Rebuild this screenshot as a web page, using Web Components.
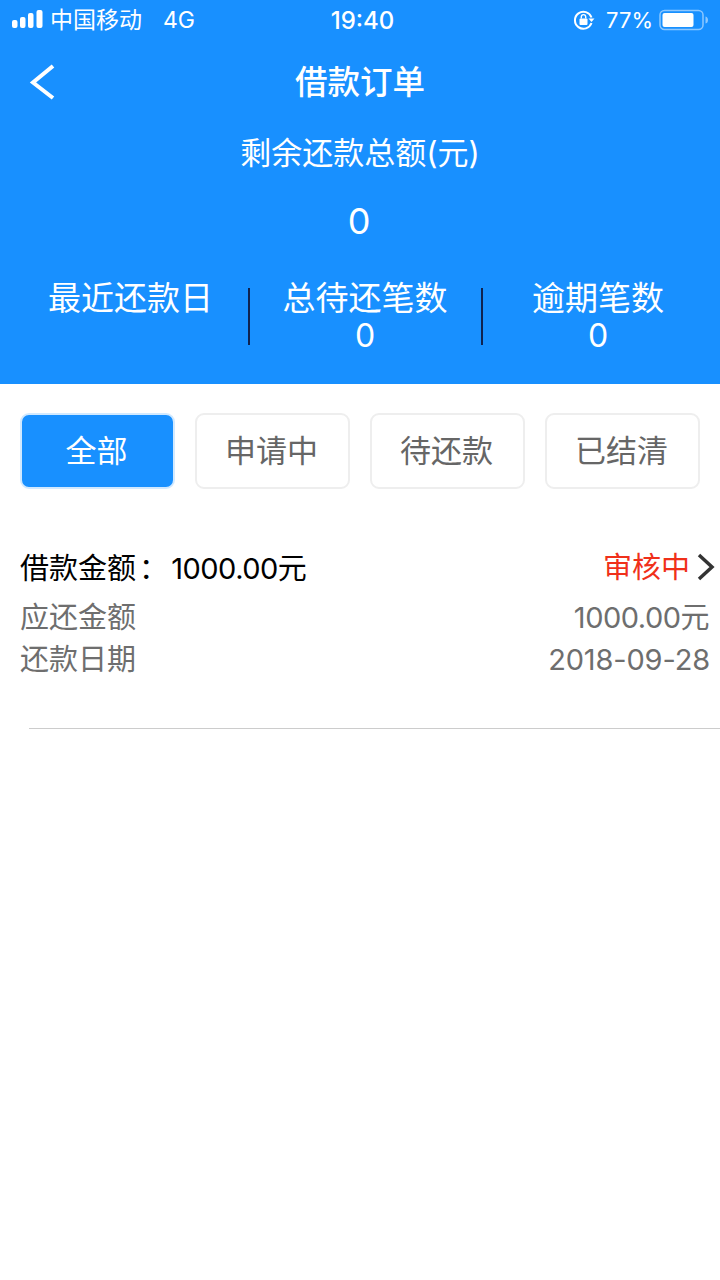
<!DOCTYPE html>
<html lang="zh">
<head>
<meta charset="utf-8">
<title>借款订单</title>
<style>
  html, body { margin: 0; background: #fff; }
  body { font-family: "Inter", "Noto Sans CJK SC", sans-serif; }
</style>
</head>
<body>
<loan-header></loan-header>
<loan-tabs>
  <loan-tab active>全部</loan-tab>
  <loan-tab>申请中</loan-tab>
  <loan-tab>待还款</loan-tab>
  <loan-tab>已结清</loan-tab>
</loan-tabs>
<loan-order amount="1000.00元" status="审核中" due="1000.00元" date="2018-09-28"></loan-order>

<script>
// status bar + title + summary, all on the blue block
class LoanHeader extends HTMLElement {
  constructor() {
    super();
    this.attachShadow({ mode: 'open' });
    this.shadowRoot.innerHTML = /*html*/ `
      <style>
        :host { display: block; height: 384px; background: #1890ff; color: #fff; overflow: hidden; }
        .status { display: grid; grid-template-columns: 1fr auto 1fr; align-items: center; height: 40px; font-size: 23px; color: #fff; }
        .left { display: flex; align-items: center; padding-left: 12px; }
        .left svg { margin-right: 6px; }
        .left .carrier { padding-bottom: 4px; }
        .left .net { margin-left: 21px; }
        .time { font-size: 24px; font-weight: 500; padding: 1px 0 0 5px; }
        .right { display: flex; align-items: center; justify-content: flex-end; padding-right: 11px; }
        .right .pct { font-size: 22px; margin: 0 6px 0 11px; }
        .nav { position: relative; display: flex; align-items: center; justify-content: center; height: 82px; font-size: 32.500px; font-weight: 500; padding-bottom: 4px; box-sizing: border-box; }
        .nav svg { position: absolute; left: 28px; top: 23px; }
        .sub { text-align: center; font-size: 31px; line-height: 40px; margin-top: 11px; }
        .total { text-align: center; font-size: 36px; line-height: 44px; margin-top: 26px; padding-right: 2px; }
        .stats { display: grid; grid-template-columns: 233px 233px 233px; padding-left: 17px; margin-top: 36px; font-size: 33px; line-height: 38px; }
        .stat { text-align: center; height: 76px; box-sizing: border-box; }
        .stat:first-child { padding-right: 6px; }
        .stat + .stat { position: relative; padding-right: 3px; }
        .stat + .stat::before { content: ""; position: absolute; left: -2px; top: 9px; width: 2px; height: 57px; background: #0f2350; }
        .stat b { font: inherit; font-size: 32px; position: relative; top: -1px; }
      </style>
      <div class="status">
        <div class="left">
          <svg width="32" height="20" viewBox="0 0 32 20" fill="#fff">
            <rect x="0" y="10" width="5.500" height="8" rx="2"/>
            <rect x="8" y="7" width="5.500" height="11" rx="2"/>
            <rect x="16" y="3" width="5.500" height="15" rx="2"/>
            <rect x="24.500" y="0" width="6" height="18" rx="2"/>
          </svg>
          <span class="carrier">中国移动</span><span class="net">4G</span>
        </div>
        <div class="time">19:40</div>
        <div class="right">
          <svg width="22" height="22" viewBox="0 0 22 22" fill="none">
            <path d="M18.500 8.500A8.500 8.500 0 1 0 18.500 14" stroke="#fff" stroke-width="2"/>
            <path d="M15.500 9.500h6l-3 3.500z" fill="#fff"/>
            <rect x="6.500" y="9.500" width="8" height="6.500" rx="1" fill="#fff"/>
            <path d="M8.300 9.500V7.800a2.200 2.200 0 0 1 4.400 0v1.700" stroke="#fff" stroke-width="1.400"/>
          </svg>
          <span class="pct">77%</span>
          <svg width="50" height="22" viewBox="0 0 50 22">
            <rect x="1" y="1.500" width="43" height="19" rx="4.500" fill="none" stroke="#8cc7ff" stroke-width="1.500"/>
            <rect x="3.500" y="4" width="31" height="14" rx="2" fill="#fff"/>
            <path d="M46.500 7.500c2 .5 2.500 2 2.500 3.500s-.5 3-2.500 3.500z" fill="#8cc7ff"/>
          </svg>
        </div>
      </div>
      <div class="nav">
        <svg width="30" height="38" viewBox="0 0 30 38" fill="none">
          <path d="M25 3 5 19.500 25 35" stroke="#fff" stroke-width="4"/>
        </svg>
        借款订单
      </div>
      <div class="sub">剩余还款总额(元)</div>
      <div class="total">0</div>
      <div class="stats">
        <div class="stat">最近还款日</div>
        <div class="stat">总待还笔数<br><b>0</b></div>
        <div class="stat">逾期笔数<br><b>0</b></div>
      </div>
    `;
  }
}

class LoanTabs extends HTMLElement {
  constructor() {
    super();
    this.attachShadow({ mode: 'open' });
    this.shadowRoot.innerHTML = /*html*/ `
      <style>
        :host { display: flex; gap: 20px; padding: 29px 20px 0; }
      </style>
      <slot></slot>
    `;
  }
}

class LoanTab extends HTMLElement {
  constructor() {
    super();
    this.attachShadow({ mode: 'open' });
    this.shadowRoot.innerHTML = /*html*/ `
      <style>
        :host { display: flex; align-items: center; justify-content: center; box-sizing: border-box; width: 155px; height: 76px; padding: 0 2px 6px 0;
          border: 2px solid #eee; border-radius: 9px; background: #fff; color: #666; font-size: 31px; }
        :host([active]) { background: #1890ff; color: #fff; border-color: #d1e9ff; }
      </style>
      <slot></slot>
    `;
  }
}

class LoanOrder extends HTMLElement {
  constructor() {
    super();
    this.attachShadow({ mode: 'open' });
    const a = (n) => this.getAttribute(n);
    this.shadowRoot.innerHTML = /*html*/ `
      <style>
        :host { display: block; margin-top: 55px; }
        .row { display: flex; justify-content: space-between; align-items: center; padding: 0 11px 0 20px; font-size: 29px; color: #6e6e6e; line-height: 42px; }
        .head { color: #000; padding-right: 4px; margin-bottom: 7px; }
        .money { letter-spacing: -0.5px; }
        .date { letter-spacing: -0.15px; margin-right: -1px; }
        .colon { font-family: "Noto Sans CJK TC", sans-serif; padding-left: 3px; margin-right: -5px; }
        .state { display: flex; align-items: center; color: #f0301a; line-height: 44px; padding-top: 2px; }
        .state svg { margin: -2px 0 0 6px; }
        .line { height: 1px; background: #ccc; margin: 47px 0 0 29px; }
      </style>
      <div class="row head">
        <span>借款金额<span class="colon">：</span> <span class="money">${a('amount')}</span></span>
        <span class="state">${a('status')}
          <svg width="20" height="28" viewBox="0 0 20 28" fill="none"><path d="M3 2l13 12L3 26" stroke="#333" stroke-width="3.500"/></svg>
        </span>
      </div>
      <div class="row"><span>应还金额</span><span class="money">${a('due')}</span></div>
      <div class="row"><span>还款日期</span><span class="date">${a('date')}</span></div>
      <div class="line"></div>
    `;
  }
}

customElements.define('loan-header', LoanHeader);
customElements.define('loan-tabs', LoanTabs);
customElements.define('loan-tab', LoanTab);
customElements.define('loan-order', LoanOrder);
</script>
</body>
</html>
